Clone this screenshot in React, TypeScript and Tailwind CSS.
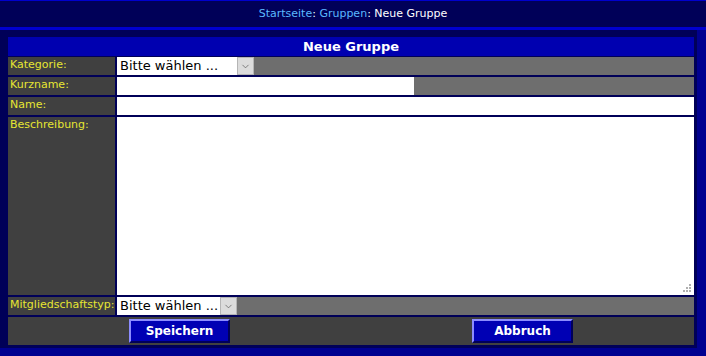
import { ChevronDown } from "lucide-react";

function FakeSelect({ width }: { width: string }) {
  return (
    <div className={`flex h-[18px] bg-white ${width}`}>
      <span className="flex-1 pl-[3px] text-[13px] leading-[18px] text-black whitespace-nowrap overflow-hidden">Bitte wählen ...</span>
      <span className="flex w-[17px] items-center justify-center bg-[#dcdcdc] border border-[#b5b5b5]">
        <ChevronDown size={11} strokeWidth={1.5} className="text-[#555]" />
      </span>
    </div>
  );
}

function Label({ children }: { children: React.ReactNode }) {
  return (
    <div className="bg-[#404040] pl-[2px] text-[11px] leading-[15px] text-[#e6e632] whitespace-nowrap">{children}</div>
  );
}

function Button({ children }: { children: React.ReactNode }) {
  return (
    <button className="h-[24px] w-[101px] bg-[#0000b4] border-2 border-t-[#8c8cff] border-l-[#8c8cff] border-b-[#00005a] border-r-[#00005a] text-[12px] font-bold text-white">
      {children}
    </button>
  );
}

export default function App() {
  return (
    <div className="w-[706px] h-[356px] overflow-hidden bg-[#000090] font-['DejaVu_Sans',Verdana,sans-serif]">
      {/* Breadcrumb */}
      <div className="h-[27px] border-t border-[#0000cc] bg-[#000058] flex items-center justify-center text-[11px] text-white">
        <span className="text-[#5ab8ff]">Startseite</span>:&nbsp;
        <span className="text-[#5ab8ff]">Gruppen</span>: Neue Gruppe
      </div>
      <div className="h-[3px] bg-[#0000d0]" />

      {/* Form panel */}
      <div className="w-[697px] bg-[#000058] pl-[8px] pr-[3px] pt-[7px] pb-[3px]">
        <div className="h-[19px] bg-[#0000b0] flex items-center justify-center text-[13px] font-bold text-white mb-[1px]">
          Neue Gruppe
        </div>
        <div className="grid grid-cols-[107px_1fr] gap-[2px] grid-rows-[18px_18px_18px_178px_18px_28px]">
          <Label>Kategorie:</Label>
          <div className="bg-[#6e6e6e]">
            <FakeSelect width="w-[137px]" />
          </div>

          <Label>Kurzname:</Label>
          <div className="bg-[#6e6e6e]">
            <input className="block h-[18px] w-[297px] bg-white outline-none" />
          </div>

          <Label>Name:</Label>
          <div className="bg-[#6e6e6e]">
            <input className="block h-[18px] w-full bg-white outline-none" />
          </div>

          <Label>Beschreibung:</Label>
          <div className="bg-[#6e6e6e] relative">
            <textarea className="block w-full h-[178px] bg-white outline-none resize-none" />
            {/* resize grip */}
            <svg className="absolute right-[2px] bottom-[2px]" width="9" height="9" viewBox="0 0 9 9">
              <rect x="6" y="0" width="2" height="2" fill="#b0b0b0" />
              <rect x="3" y="3" width="2" height="2" fill="#b0b0b0" />
              <rect x="6" y="3" width="2" height="2" fill="#b0b0b0" />
              <rect x="0" y="6" width="2" height="2" fill="#b0b0b0" />
              <rect x="3" y="6" width="2" height="2" fill="#b0b0b0" />
              <rect x="6" y="6" width="2" height="2" fill="#b0b0b0" />
            </svg>
          </div>

          <Label>Mitgliedschaftstyp:</Label>
          <div className="bg-[#6e6e6e]">
            <FakeSelect width="w-[120px]" />
          </div>

          <div className="col-span-2 bg-[#404040] grid grid-cols-2 items-center">
            <div className="flex justify-center">
              <Button>Speichern</Button>
            </div>
            <div className="flex justify-center">
              <Button>Abbruch</Button>
            </div>
          </div>
        </div>
      </div>
    </div>
  );
}
